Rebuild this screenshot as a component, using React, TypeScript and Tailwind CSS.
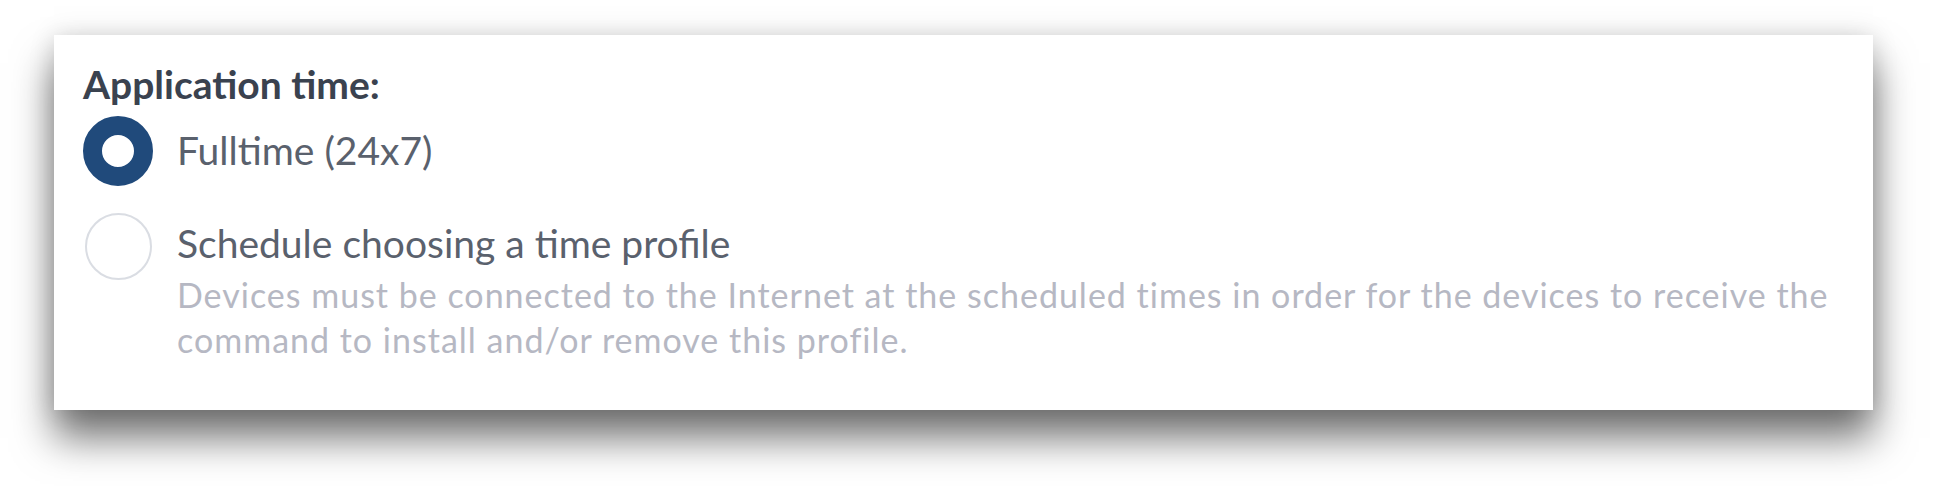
export default function App() {
  return (
    <div className="w-[1934px] h-[486px] bg-white pl-[54px] pt-[35px]" style={{ fontFamily: 'Lato, "Open Sans", sans-serif' }}>
      <div className="w-[1819px] h-[375px] bg-white pl-[29px] pt-[25px] shadow-[0_28px_38px_rgba(0,0,0,0.55),0_0_24px_rgba(0,0,0,0.14)]">
        <h2 className="text-[39px] leading-[48px] font-bold text-[#3a424f]">Application time:</h2>

        {/* Fulltime option */}
        <label className="mt-[8px] flex items-center gap-[24px]">
          <span className="w-[70px] h-[70px] rounded-full border-[19px] border-[#204a7b] bg-white shrink-0"></span>
          <span className="pb-[3px] text-[39px] leading-[48px] text-[#5a616d]">Fulltime (24x7)</span>
        </label>

        {/* Schedule option */}
        <label className="mt-[27px] flex items-start gap-[24px]">
          <span className="w-[70px] h-[67px] flex justify-center shrink-0">
            <span className="w-[67px] h-[67px] rounded-full border-[2px] border-[#dadde3] bg-white"></span>
          </span>
          <div className="pt-[6px]">
            <div className="text-[39px] leading-[48px] text-[#5a616d]">Schedule choosing a time profile</div>
            <p className="mt-[5px] text-[34px] leading-[45px] tracking-[1px] text-[#b6b8c3]">
              Devices must be connected to the Internet at the scheduled times in order for the devices to receive the
              <br />
              command to install and/or remove this profile.
            </p>
          </div>
        </label>
      </div>
    </div>
  );
}
